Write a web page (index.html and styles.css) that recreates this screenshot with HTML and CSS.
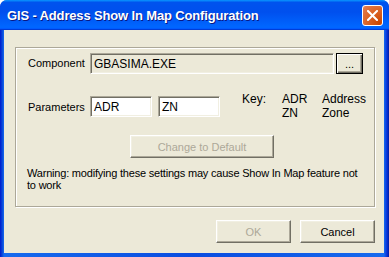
FILE: index.html
```html
<!DOCTYPE html>
<html lang="en">
<head>
  <meta charset="UTF-8">
  <title>GIS - Address Show In Map Configuration</title>
  <link rel="stylesheet" href="styles.css">
</head>
<body>
  <div class="window">
    <div class="titlebar">
      <span class="title">GIS - Address Show In Map Configuration</span>
      <span class="close">
        <svg width="11" height="11" viewBox="0 0 11 11">
          <path d="M1 1 L10 10 M10 1 L1 10" stroke="#fff" stroke-width="2" stroke-linecap="square"/>
        </svg>
      </span>
    </div>
    <div class="client">
      <div class="group">
        <div class="row comp-row">
          <span class="label">Component</span>
          <div class="field readonly">GBASIMA.EXE</div>
          <button class="btn browse">...</button>
        </div>
        <div class="row param-row">
          <span class="label">Parameters</span>
          <div class="field param">ADR</div>
          <div class="field param zn">ZN</div>
          <span class="key">Key:</span>
          <div class="key-col">ADR<br>ZN</div>
          <div class="key-col">Address<br>Zone</div>
        </div>
        <button class="btn default" disabled>Change to Default</button>
        <p class="warning">Warning: modifying these settings may cause Show In Map feature not<br>to work</p>
      </div>
      <div class="actions">
        <button class="btn action" disabled>OK</button>
        <button class="btn action">Cancel</button>
      </div>
    </div>
  </div>
</body>
</html>
```

FILE: styles.css
```css
body {
  margin: 0;
  background: #fff;
  font-family: "Liberation Sans", Arial, sans-serif;
  font-size: 11px;
  color: #000;
}
.window {
  width: 389px;
  height: 257px;
  display: flex;
  flex-direction: column;
  background: linear-gradient(to right, #0019cf 0, #0842d6 2px, #166aee 4px, #0a4ce0 50%, #166aee calc(100% - 5px), #0831d9 calc(100% - 2px), #001ea0 100%);
  border-radius: 7px 7px 0 0;
  overflow: hidden;
}
.titlebar {
  height: 30px;
  flex: none;
  display: flex;
  align-items: center;
  justify-content: space-between;
  padding: 0 6px 0 7px;
  background: linear-gradient(#0997ff 0, #0053ee 8%, #0050ee 40%, #0066ff 88%, #0066ff 93%, #005bff 95%, #003dd7 96%, #003dd7 100%);
}
.title {
  color: #fff;
  font-weight: bold;
  font-size: 13px;
  letter-spacing: -0.15px;
  text-shadow: 1px 1px #0a1883;
  margin-top: 1px;
}
.close {
  width: 19px;
  height: 19px;
  border: 1px solid #fff;
  border-radius: 3px;
  background: radial-gradient(circle at 90% 90%, #cc4600 0, #dc6527 55%, #e2794b 90%, #f1a88a 100%);
  display: flex;
  align-items: center;
  justify-content: center;
  margin-top: 1px;
}
.client {
  flex: 1;
  margin: 0 5px 4px 4px;
  background: #ece9d8;
  padding: 17px 9px 0 11px;
  display: flex;
  flex-direction: column;
}
.group {
  height: 160px;
  box-sizing: border-box;
  border: 1px solid #aca899;
  box-shadow: inset 1px 1px #fff, 1px 1px #fff;
  padding: 4px 11px 0 12px;
}
.row {
  display: flex;
  align-items: center;
}
.label {
  width: 62px;
  flex: none;
  box-sizing: border-box;
  padding-right: 8px;
  text-align: right;
}
.field {
  height: 21px;
  box-sizing: border-box;
  border: 1px solid;
  border-color: #aca899 #fff #fff #aca899;
  box-shadow: inset 1px 1px #716f64, inset -1px -1px #f1efe2;
  padding: 3px 3px 0;
  line-height: 14px;
  font-size: 12px;
  background: #fff;
}
.readonly {
  flex: 1;
  background: #ece9d8;
}
.btn {
  font-family: "Liberation Sans", Arial, sans-serif;
  font-size: 11px;
  color: #000;
  background: #ece9d8;
  border: 1px solid;
  border-color: #fff #716f64 #716f64 #fff;
  box-shadow: inset -1px -1px #aca899, inset 1px 1px #f1efe2;
  padding: 0;
  margin: 0;
  box-sizing: border-box;
}
.btn:disabled {
  color: #aca899;
}
.browse {
  width: 27px;
  height: 21px;
  margin-left: 2px;
  margin-top: 1px;
  border: 1px solid #000;
  box-shadow: inset 1px 1px #fff, inset -1px -1px #716f64, inset -2px -2px #aca899;
  line-height: 12px;
}
.param-row {
  margin-top: 22px;
  align-items: flex-start;
}
.param-row .label {
  line-height: 21px;
  margin-top: 1px;
}
.param {
  width: 62px;
}
.zn {
  margin-left: 6px;
}
.key {
  margin-left: 22px;
  width: 40px;
  line-height: 14px;
  margin-top: -4px;
  font-size: 12px;
}
.key-col {
  width: 40px;
  line-height: 14px;
  margin-top: -4px;
  font-size: 12px;
}
.default {
  display: block;
  width: 144px;
  height: 23px;
  margin: 15px 0 0 102px;
}
.warning {
  margin: 9px 0 0 -1px;
  line-height: 12px;
  font-size: 11px;
  letter-spacing: -0.2px;
  white-space: nowrap;
}
.actions {
  display: flex;
  justify-content: flex-end;
  gap: 9px;
  margin-top: 13px;
}
.action {
  width: 75px;
  height: 23px;
}
```
